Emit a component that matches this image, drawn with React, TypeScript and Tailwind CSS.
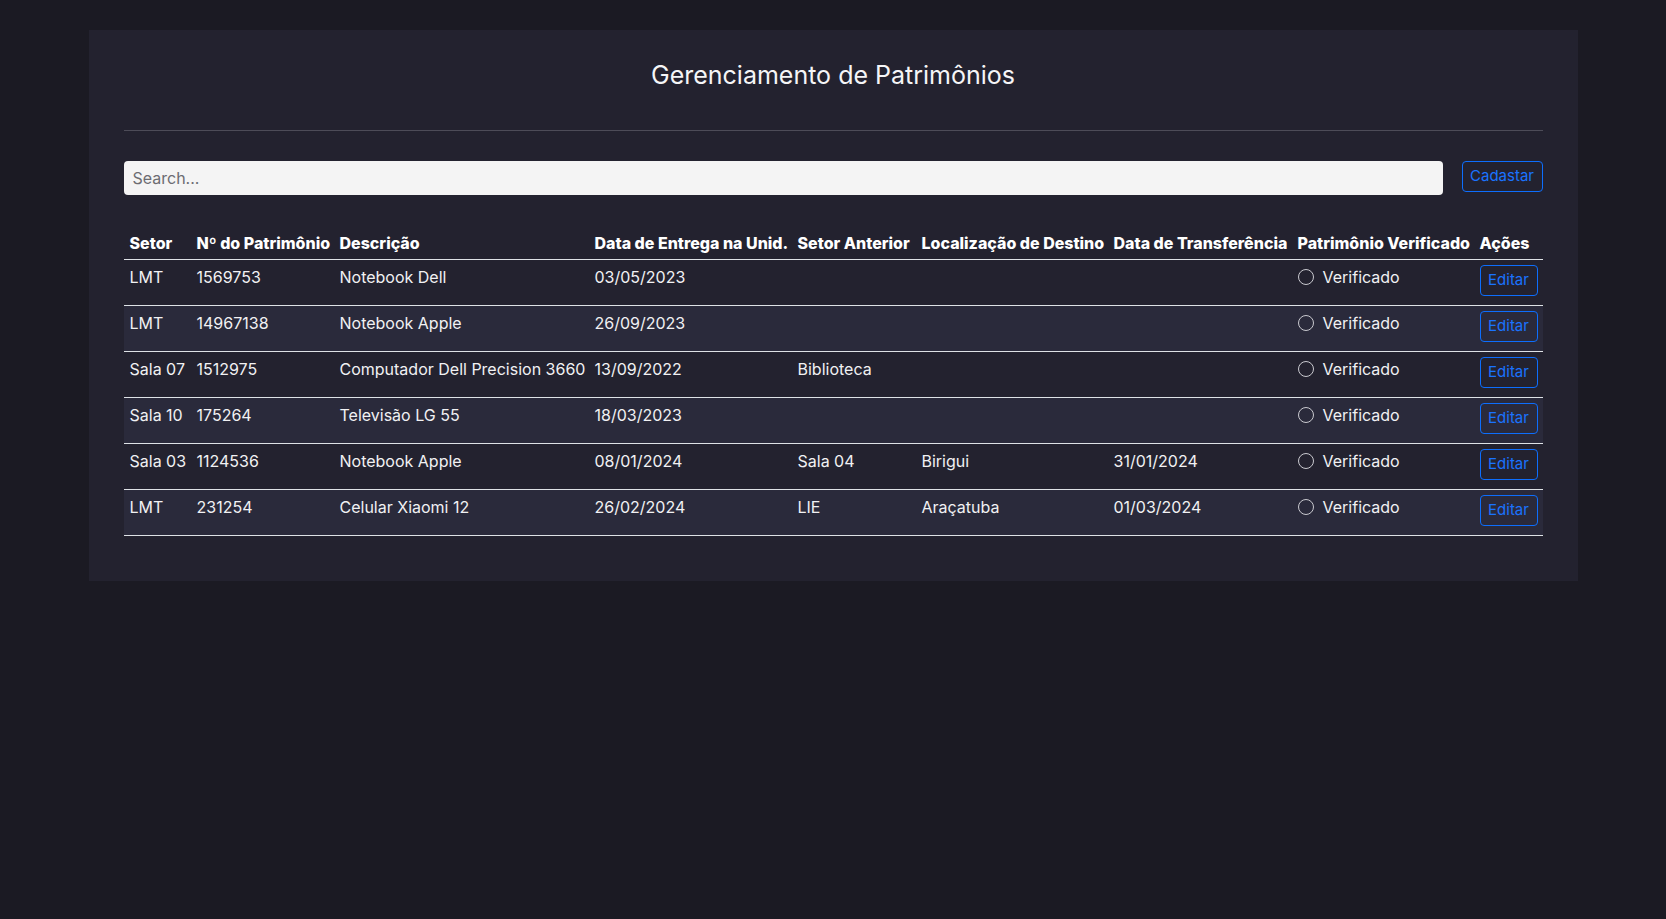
import React from "react";

const rows = [
  { setor: "LMT", num: "1569753", desc: "Notebook Dell", entrega: "03/05/2023", anterior: "", destino: "", transf: "" },
  { setor: "LMT", num: "14967138", desc: "Notebook Apple", entrega: "26/09/2023", anterior: "", destino: "", transf: "" },
  { setor: "Sala 07", num: "1512975", desc: "Computador Dell Precision 3660", entrega: "13/09/2022", anterior: "Biblioteca", destino: "", transf: "" },
  { setor: "Sala 10", num: "175264", desc: "Televisão LG 55", entrega: "18/03/2023", anterior: "", destino: "", transf: "" },
  { setor: "Sala 03", num: "1124536", desc: "Notebook Apple", entrega: "08/01/2024", anterior: "Sala 04", destino: "Birigui", transf: "31/01/2024" },
  { setor: "LMT", num: "231254", desc: "Celular Xiaomi 12", entrega: "26/02/2024", anterior: "LIE", destino: "Araçatuba", transf: "01/03/2024" },
];

const headers = [
  "Setor",
  "Nº do Patrimônio",
  "Descrição",
  "Data de Entrega na Unid.",
  "Setor Anterior",
  "Localização de Destino",
  "Data de Transferência",
  "Patrimônio Verificado",
  "Ações",
];

export default function App() {
  return (
    <div
      className="min-h-screen bg-[#1b1a23] pt-[30px] text-[#f1f1f3]"
      style={{ fontFamily: "Inter, 'Noto Sans', sans-serif" }}
    >
      <div className="mx-auto w-[1489px] bg-[#23222f] px-[35px] pt-[30px] pb-[45px]">
        {/* Title */}
        <h1 className="text-center text-[25px] leading-[30px] font-normal text-[#f5f5f7]">
          Gerenciamento de Patrimônios
        </h1>
        <div className="mt-[40px] h-px bg-[#4d4c58]" />

        {/* Search bar */}
        <div className="mt-[30px] flex items-start gap-[19px]">
          <input
            type="text"
            placeholder="Search..."
            className="h-[34px] flex-1 rounded-[4px] bg-[#f4f4f4] px-[9px] text-[16px] text-[#212529] placeholder:text-[#6c6c72] outline-none"
          />
          <button className="h-[31px] w-[81px] rounded-[4px] border border-[#0d6efd] text-[15px] text-[#1a73ff]">
            Cadastar
          </button>
        </div>

        {/* Table */}
        <table className="mt-[32px] w-full table-fixed border-collapse text-left text-[16px]">
          <colgroup>
            <col className="w-[67px]" />
            <col className="w-[143px]" />
            <col className="w-[255px]" />
            <col className="w-[203px]" />
            <col className="w-[124px]" />
            <col className="w-[192px]" />
            <col className="w-[184px]" />
            <col className="w-[182px]" />
            <col className="w-[69px]" />
          </colgroup>
          <thead>
            <tr className="border-b border-[#dee2e6]">
              {headers.map((h) => (
                <th
                  key={h}
                  className="whitespace-nowrap px-[6px] pt-[4px] pb-[4px] leading-6 font-extrabold text-white"
                >
                  {h}
                </th>
              ))}
            </tr>
          </thead>
          <tbody>
            {rows.map((r, i) => (
              <tr
                key={i}
                className={
                  i % 2 === 1
                    ? "border-b border-[#dee2e6] bg-[#2a2a3b]"
                    : "border-b border-[#dee2e6]"
                }
              >
                <td className="h-[45px] whitespace-nowrap px-[6px] pt-[5px] align-top leading-6">{r.setor}</td>
                <td className="px-[6px] pt-[5px] align-top leading-6">{r.num}</td>
                <td className="whitespace-nowrap px-[6px] pt-[5px] align-top leading-6">{r.desc}</td>
                <td className="px-[6px] pt-[5px] align-top leading-6">{r.entrega}</td>
                <td className="px-[6px] pt-[5px] align-top leading-6">{r.anterior}</td>
                <td className="px-[6px] pt-[5px] align-top leading-6">{r.destino}</td>
                <td className="px-[6px] pt-[5px] align-top leading-6">{r.transf}</td>
                <td className="px-[6px] pt-[5px] align-top leading-6">
                  <label className="flex items-center gap-[9px]">
                    <span className="h-4 w-4 shrink-0 rounded-full border border-[#c9c9cf]" />
                    <span>Verificado</span>
                  </label>
                </td>
                <td className="px-[6px] pt-[5px] pb-[9px] align-top">
                  <button className="h-[31px] w-[58px] rounded-[4px] border border-[#0d6efd] text-[15px] text-[#1a73ff]">
                    Editar
                  </button>
                </td>
              </tr>
            ))}
          </tbody>
        </table>
      </div>
    </div>
  );
}
